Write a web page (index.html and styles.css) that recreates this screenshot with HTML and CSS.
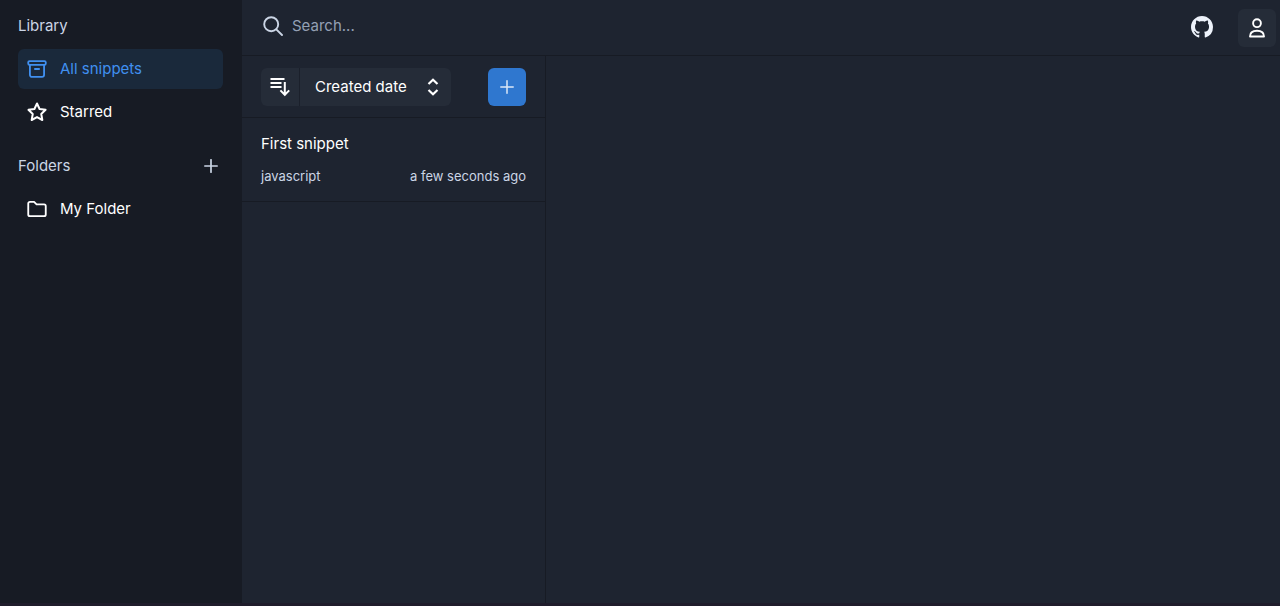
FILE: index.html
```
<!DOCTYPE html>
<html lang="en">
<head>
    <meta charset="UTF-8">
    <meta name="viewport" content="width=device-width, initial-scale=1.0">
    <title>Snippets</title>
    <link rel="stylesheet" href="styles.css">
</head>
<body>
    <div class="app">
        <aside class="sidebar">
            <div class="section-header">
                <h2>Library</h2>
            </div>
            <nav class="nav">
                <a class="nav-item active" href="#all">
                    <svg class="icon" viewBox="0 0 24 24" fill="none" stroke="currentColor" stroke-width="2.2" stroke-linejoin="round" stroke-linecap="round">
                        <rect x="1.5" y="2.5" width="21" height="4.5" rx="1.5"/>
                        <path d="M3.5 7v12a2.5 2.5 0 0 0 2.5 2.5h12a2.5 2.5 0 0 0 2.5-2.5V7M9.5 12h5"/>
                    </svg>
                    All snippets
                </a>
                <a class="nav-item" href="#starred">
                    <svg class="icon" viewBox="0 0 24 24" fill="none" stroke="currentColor" stroke-width="2.4" stroke-linejoin="round">
                        <path d="M12 1.8l3.1 6.6 7.2 1-5.2 5 1.3 7.2-6.4-3.5-6.4 3.5 1.3-7.2-5.2-5 7.2-1z"/>
                    </svg>
                    Starred
                </a>
            </nav>

            <div class="section-header folders">
                <h2>Folders</h2>
                <button class="add-folder" aria-label="Add folder">
                    <svg viewBox="0 0 14 14" fill="none" stroke="currentColor" stroke-width="1.7" stroke-linecap="round">
                        <path d="M7 .8v12.4M.8 7h12.4"/>
                    </svg>
                </button>
            </div>
            <nav class="nav">
                <a class="nav-item" href="#my-folder">
                    <svg class="icon" viewBox="0 0 24 24" fill="none" stroke="currentColor" stroke-width="2.2" stroke-linejoin="round">
                        <path d="M1.5 5.5a2 2 0 0 1 2-2h5l3 3h9a2 2 0 0 1 2 2v10a2 2 0 0 1-2 2h-17a2 2 0 0 1-2-2z"/>
                    </svg>
                    My Folder
                </a>
            </nav>
        </aside>

        <div class="main">
            <header class="topbar">
                <label class="search">
                    <svg class="search-icon" viewBox="0 0 20 20" fill="none" stroke="currentColor" stroke-width="1.9" stroke-linecap="round">
                        <circle cx="8.2" cy="8.2" r="7"/>
                        <path d="M13.3 13.3l5.7 5.7"/>
                    </svg>
                    <input type="text" placeholder="Search..." aria-label="Search">
                </label>
                <a class="github" href="#github" aria-label="GitHub">
                    <svg viewBox="0 0 16 16" fill="currentColor">
                        <path d="M8 0C3.58 0 0 3.58 0 8c0 3.54 2.29 6.53 5.47 7.59.4.07.55-.17.55-.38 0-.19-.01-.82-.01-1.49-2.01.37-2.53-.49-2.69-.94-.09-.23-.48-.94-.82-1.13-.28-.15-.68-.52-.01-.53.63-.01 1.08.58 1.23.82.72 1.21 1.87.87 2.33.66.07-.52.28-.87.51-1.07-1.78-.2-3.64-.89-3.64-3.95 0-.87.31-1.59.82-2.15-.08-.2-.36-1.02.08-2.12 0 0 .67-.21 2.2.82.64-.18 1.32-.27 2-.27s1.36.09 2 .27c1.53-1.04 2.2-.82 2.2-.82.44 1.1.16 1.92.08 2.12.51.56.82 1.27.82 2.15 0 3.07-1.87 3.75-3.65 3.95.29.25.54.73.54 1.48 0 1.07-.01 1.93-.01 2.2 0 .21.15.46.55.38A8.01 8.01 0 0 0 16 8c0-4.42-3.58-8-8-8z"/>
                    </svg>
                </a>
                <button class="user" aria-label="Account">
                    <svg viewBox="0 0 18 20" fill="none" stroke="currentColor" stroke-width="1.9" stroke-linejoin="round">
                        <circle cx="9" cy="5.2" r="3.9"/>
                        <path d="M2 18.5c0-3.6 2.6-5.7 7-5.7s7 2.1 7 5.7z"/>
                    </svg>
                </button>
            </header>

            <div class="content">
                <section class="list">
                    <div class="toolbar">
                        <div class="sort">
                            <button class="sort-order" aria-label="Sort order">
                                <svg viewBox="0 0 20 20" fill="none" stroke="currentColor" stroke-width="2">
                                    <path d="M.5 2h14M.5 6h11M.5 10h11M14.8 5v12.5M10.4 13.4l4.4 4.4 4.4-4.4"/>
                                </svg>
                            </button>
                            <div class="sort-field">
                                <select aria-label="Sort by">
                                    <option>Created date</option>
                                    <option>Updated date</option>
                                    <option>Title</option>
                                </select>
                                <svg class="chevrons" viewBox="0 0 12 18" fill="none" stroke="currentColor" stroke-width="2.2">
                                    <path d="M1.5 6L6 1.8 10.5 6M1.5 12L6 16.2 10.5 12"/>
                                </svg>
                            </div>
                        </div>
                        <button class="add-snippet" aria-label="Add snippet">
                            <svg viewBox="0 0 14 14" fill="none" stroke="currentColor" stroke-width="1.5" stroke-linecap="round">
                                <path d="M7 .8v12.4M.8 7h12.4"/>
                            </svg>
                        </button>
                    </div>

                    <a class="snippet" href="#first-snippet">
                        <h3>First snippet</h3>
                        <div class="snippet-info">
                            <span>javascript</span>
                            <span>a few seconds ago</span>
                        </div>
                    </a>
                </section>

                <main class="editor"></main>
            </div>
        </div>
    </div>
</body>
</html>
```
FILE: styles.css
```
* {
    box-sizing: border-box;
}
body {
    margin: 0;
    font-family: Inter, sans-serif;
    font-size: 15px;
    line-height: 24px;
    background: #1e2430;
    color: #fff;
}
h2, h3 {
    margin: 0;
    font-size: 15px;
    font-weight: 400;
}
a {
    color: inherit;
    text-decoration: none;
}
button {
    display: flex;
    align-items: center;
    justify-content: center;
    padding: 0;
    border: none;
    background: none;
    color: inherit;
    cursor: pointer;
}
svg {
    display: block;
    flex-shrink: 0;
}
.app {
    display: flex;
    min-height: 100vh;
    border-bottom: 3px solid #1f1c2b;
}

/* sidebar */
.sidebar {
    width: 242px;
    flex-shrink: 0;
    padding: 14px 19px 14px 18px;
    background: #171b24;
}
.section-header {
    display: flex;
    align-items: center;
    justify-content: space-between;
    margin-bottom: 11px;
    color: #cbd5e5;
}
.section-header.folders {
    margin-top: 22px;
}
.add-folder {
    width: 24px;
    height: 24px;
}
.add-folder svg {
    width: 14px;
    height: 14px;
}
.nav {
    display: flex;
    flex-direction: column;
    gap: 3px;
}
.nav-item {
    display: flex;
    align-items: center;
    gap: 13px;
    height: 40px;
    padding: 0 9px;
    border-radius: 6px;
}
.nav-item.active {
    background: #1a293b;
    color: #4090f0;
}
.icon {
    width: 20px;
    height: 20px;
}

/* top bar */
.main {
    display: flex;
    flex-direction: column;
    flex: 1;
    min-width: 0;
}
.topbar {
    display: flex;
    align-items: center;
    height: 56px;
    padding: 0 4px 0 21px;
    border-bottom: 1px solid #171b24;
}
.search {
    display: flex;
    align-items: center;
    flex: 1;
    gap: 9px;
    margin-bottom: 4px;
    color: #cbd5e5;
}
.search-icon {
    width: 20px;
    height: 20px;
}
.search input {
    flex: 1;
    min-width: 0;
    padding: 0;
    border: none;
    outline: none;
    background: none;
    color: #fff;
    font: inherit;
}
.search input::placeholder {
    color: #94a0b4;
    opacity: 1;
}
.github {
    margin-right: 25px;
    margin-bottom: 2px;
    color: #edf2fa;
}
.github svg {
    width: 22px;
    height: 22px;
}
.user {
    width: 38px;
    height: 38px;
    border-radius: 6px;
    background: #252c38;
}
.user svg {
    width: 18px;
    height: 20px;
}

/* snippet list */
.content {
    display: flex;
    flex: 1;
}
.list {
    width: 304px;
    flex-shrink: 0;
    border-right: 1px solid #171b24;
}
.toolbar {
    display: flex;
    align-items: center;
    justify-content: space-between;
    height: 62px;
    padding: 0 19px;
    border-bottom: 1px solid #171b24;
}
.sort {
    display: flex;
    height: 38px;
    border-radius: 6px;
    background: #252c38;
}
.sort-order {
    width: 39px;
    border-right: 1px solid #1b202b;
}
.sort-order svg {
    width: 20px;
    height: 20px;
}
.sort-field {
    position: relative;
    display: flex;
    align-items: center;
}
.sort-field select {
    appearance: none;
    width: 151px;
    height: 38px;
    padding: 0 36px 0 15px;
    border: none;
    outline: none;
    background: none;
    color: #fff;
    font: inherit;
}
.sort-field option {
    background: #252c38;
}
.chevrons {
    position: absolute;
    right: 12px;
    width: 12px;
    height: 18px;
    pointer-events: none;
}
.add-snippet {
    width: 38px;
    height: 38px;
    border-radius: 6px;
    background: #2f77cf;
    color: #dce8f7;
}
.add-snippet svg {
    width: 14px;
    height: 14px;
}
.snippet {
    display: block;
    padding: 14px 19px 13px;
    border-bottom: 1px solid #171b24;
}
.snippet-info {
    display: flex;
    justify-content: space-between;
    margin-top: 8px;
    color: #cbd5e5;
    font-size: 13px;
}
.editor {
    flex: 1;
}
```
